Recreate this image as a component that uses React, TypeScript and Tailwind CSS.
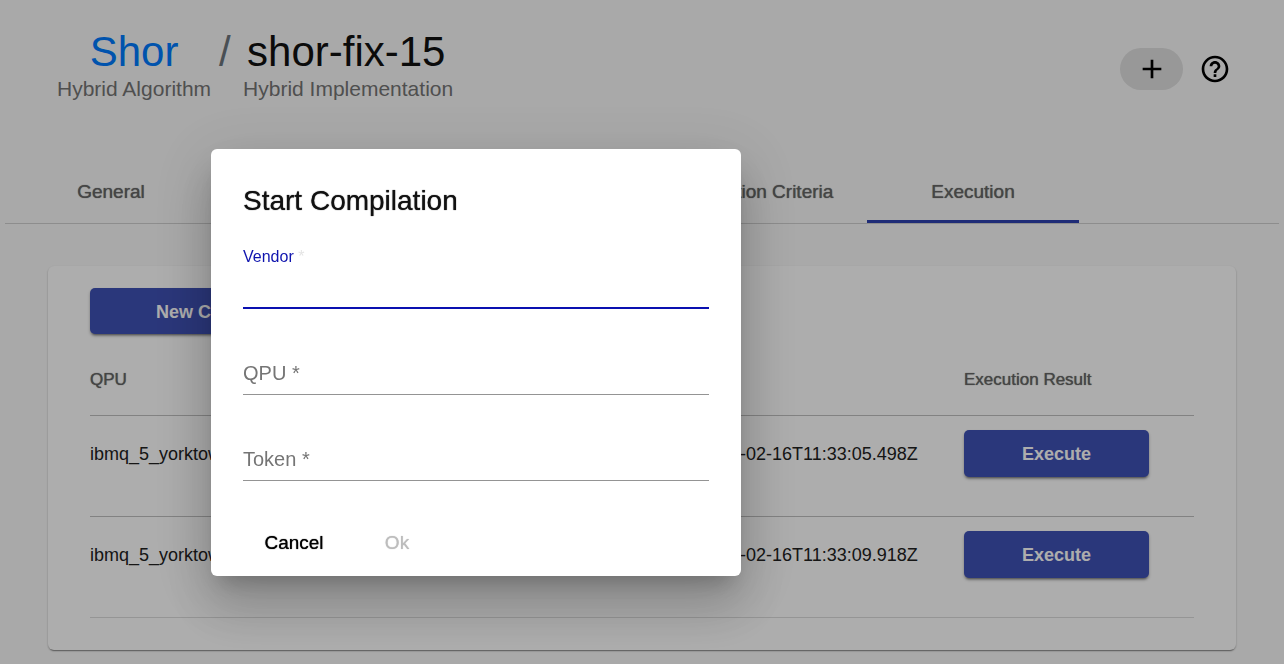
import { MdAdd, MdHelpOutline } from "react-icons/md";

const rows = [
  { qpu: "ibmq_5_yorktown", time: "2021-02-16T11:33:05.498Z" },
  { qpu: "ibmq_5_yorktown", time: "2021-02-16T11:33:09.918Z" },
];

const raised =
  "rounded-[5px] bg-[#3f51b5] pt-px text-lg font-bold text-white shadow-[0_3px_2px_-2px_rgba(0,0,0,0.3),0_2px_3px_rgba(0,0,0,0.3)]";

const medium = "[text-shadow:0_0_1px_currentColor]";

function Header() {
  return (
    <header className="flex items-start justify-between pl-[52px] pr-12 pt-[29px]">
      <div className="flex text-[42px] leading-[46px]">
        <div className="text-center">
          <a href="#shor" className="text-[#007bff]">Shor</a>
          <p className="text-[21px] leading-7 text-[#757575]">Hybrid Algorithm</p>
        </div>
        <span className="w-8 pl-2 text-[#6c757d]">/</span>
        <div>
          <h1 className="pl-1 text-[#111111]">shor-fix-15</h1>
          <p className="text-[21px] leading-7 text-[#757575]">Hybrid Implementation</p>
        </div>
      </div>
      <div className="flex items-center gap-4 pt-[19px]">
        <button aria-label="Add" className="flex h-[42px] w-[63px] items-center justify-center rounded-full bg-[#e0e0e0]">
          <MdAdd size={32} />
        </button>
        <button aria-label="Help">
          <MdHelpOutline size={32} />
        </button>
      </div>
    </header>
  );
}

function Tabs() {
  const tab = "h-16 w-[212px] border-b-[3px] pt-1.5 text-[19px] text-[#666666]";
  return (
    <nav role="tablist" className="mt-14 flex border-b border-[#d0d0d0]">
      <button role="tab" aria-selected="false" className={`${tab} ${medium} border-transparent`}>General</button>
      <div className="w-[438px]" />
      <button role="tab" aria-selected="false" className={`${tab} ${medium} border-transparent`}>Selection Criteria</button>
      <button role="tab" aria-selected="true" className={`${tab} ${medium} border-[#2f42b0]`}>Execution</button>
    </nav>
  );
}

function Jobs() {
  const th = "pt-1 text-left text-[17px] font-normal text-[#666666]";
  return (
    <section className="mx-[43px] mt-[42px] rounded-md bg-white px-[42px] pb-8 pt-[22px] shadow-[0_3px_1px_-2px_rgba(0,0,0,0.25),0_1px_2px_rgba(0,0,0,0.3)]">
      <button className={`${raised} h-[46px] w-[278px]`}>New Compilation</button>
      <table className="mt-[7px] w-full table-fixed border-collapse">
        <colgroup>
          <col />
          <col className="w-[264px]" />
          <col className="w-[230px]" />
        </colgroup>
        <thead>
          <tr className="h-[74px] border-b border-[#c0c0c0]">
            <th className={`${th} ${medium}`}>QPU</th>
            <th className={`${th} ${medium}`}>Time</th>
            <th className={`${th} ${medium}`}>Execution Result</th>
          </tr>
        </thead>
        <tbody>
          {rows.map((row) => (
            <tr key={row.time} className="h-[101px] border-b border-[#c0c0c0] align-top text-lg text-[#212121] last:border-[#dcdcdc]">
              <td className="pt-6">{row.qpu}</td>
              <td className="pt-6">{row.time}</td>
              <td className="pt-[14px]">
                <button className={`${raised} h-[47px] w-[185px]`}>Execute</button>
              </td>
            </tr>
          ))}
        </tbody>
      </table>
    </section>
  );
}

function Field({ id, label }: { id: string; label: string }) {
  return (
    <div className="relative mb-5 h-[66px] border-b border-[#949494]">
      <label htmlFor={id} className="absolute bottom-[5px] left-0 text-xl leading-8 text-[#757575]">{label} *</label>
      <input id={id} required className="h-full w-full bg-transparent pt-6 text-xl outline-none" />
    </div>
  );
}

function CompilationDialog() {
  return (
    <div className="fixed inset-0 flex items-start bg-black/32 pl-[211px] pt-[149px]">
      <form
        role="dialog"
        aria-labelledby="dialog-title"
        className="w-[530px] rounded-md bg-white px-8 pb-[9px] pt-8 shadow-[0_14px_20px_-9px_rgba(0,0,0,0.2),0_31px_50px_4px_rgba(0,0,0,0.14),0_12px_60px_10px_rgba(0,0,0,0.12)]"
      >
        <h2 id="dialog-title" className={`text-[28px] leading-10 text-[#111111] ${medium}`}>Start Compilation</h2>
        <div className="mb-5 mt-6 h-16 border-b-2 border-[#0a10b0]">
          <label htmlFor="vendor" className="block text-base leading-6 text-[#0f14ae]">
            Vendor <span className="text-[#e5e5e5]">*</span>
          </label>
          <input id="vendor" required className="h-9 w-full bg-transparent text-xl outline-none" />
        </div>
        <Field id="qpu" label="QPU" />
        <Field id="token" label="Token" />
        <div className="flex pt-[18px] text-[19px]">
          <button type="button" className={`h-12 w-[102px] text-black ${medium}`}>Cancel</button>
          <button type="submit" disabled className={`ml-4 h-12 w-[72px] text-[#bdbdbd] ${medium}`}>Ok</button>
        </div>
      </form>
    </div>
  );
}

export default function App() {
  return (
    <div className="min-h-screen bg-[#fafafa] px-[5px] pb-3 font-['Liberation_Sans',Arial,sans-serif]">
      <Header />
      <Tabs />
      <Jobs />
      <CompilationDialog />
    </div>
  );
}
